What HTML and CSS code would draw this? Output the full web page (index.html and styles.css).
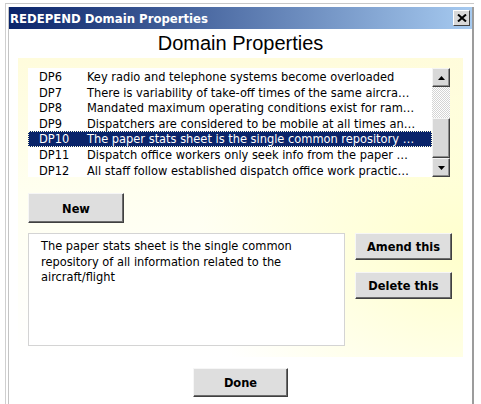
FILE: index.html
```html
<!DOCTYPE html>
<html lang="en">
<head>
  <meta charset="UTF-8" />
  <meta name="viewport" content="width=device-width, initial-scale=1.0"/>
  <title>REDEPEND Domain Properties</title>
  <link rel="stylesheet" href="styles.css">
</head>
<body>
  <div class="window">
    <div class="frame">
      <div class="titlebar">
        <span class="title">REDEPEND Domain Properties</span>
        <button class="close-btn" aria-label="Close">
          <svg width="10" height="8" viewBox="0 0 10 8"><path d="M1 0.5 L9 7.5 M9 0.5 L1 7.5" stroke="#000" stroke-width="2" fill="none"/></svg>
        </button>
      </div>

      <h1 class="heading">Domain Properties</h1>

      <div class="panel">
        <div class="listbox">
          <div class="rows">
            <div class="row"><span class="code">DP6</span><span class="desc">Key radio and telephone systems become overloaded</span></div>
            <div class="row"><span class="code">DP7</span><span class="desc">There is variability of take-off times of the same aircra…</span></div>
            <div class="row"><span class="code">DP8</span><span class="desc">Mandated maximum operating conditions exist for ram…</span></div>
            <div class="row"><span class="code">DP9</span><span class="desc">Dispatchers are considered to be mobile at all times an…</span></div>
            <div class="row selected"><span class="code">DP10</span><span class="desc">The paper stats sheet is the single common repository …</span></div>
            <div class="row"><span class="code">DP11</span><span class="desc">Dispatch office workers only seek info from the paper …</span></div>
            <div class="row"><span class="code">DP12</span><span class="desc">All staff follow established dispatch office work practic…</span></div>
          </div>
          <div class="scrollbar">
            <div class="sb-btn">
              <svg width="7" height="4" viewBox="0 0 7 4"><path d="M3.5 0 L7 4 L0 4 Z" fill="#000"/></svg>
            </div>
            <div class="sb-track"></div>
            <div class="sb-thumb"></div>
            <div class="sb-btn">
              <svg width="7" height="4" viewBox="0 0 7 4"><path d="M0 0 L7 0 L3.5 4 Z" fill="#000"/></svg>
            </div>
          </div>
        </div>

        <button class="btn btn-new">New</button>

        <div class="edit-area">
          <div class="textbox">The paper stats sheet is the single common<br>repository of all information related to the<br>aircraft/flight</div>
          <div class="side-buttons">
            <button class="btn btn-side">Amend this</button>
            <button class="btn btn-side">Delete this</button>
          </div>
        </div>
      </div>

      <div class="footer">
        <button class="btn btn-done">Done</button>
      </div>
    </div>
  </div>
</body>
</html>
```

FILE: styles.css
```css
body {
  margin: 0;
  overflow: hidden;
  background: #fff;
  font-family: "DejaVu Sans Condensed", "DejaVu Sans", sans-serif;
  font-size: 12.7px;
  color: #000;
}
.window {
  margin: 3px 0 0 5px;
  width: 466px;
  height: 397px;
  border-top: 1px solid #c8c8c8;
  border-left: 1px solid #cfcfcf;
  padding: 3px 0 0 2px;
}
.frame {
  border-left: 1px solid #c4c4c4;
  border-right: 2px solid #9c9c9c;
  height: 100%;
}
.titlebar {
  height: 22px;
  display: flex;
  align-items: center;
  justify-content: space-between;
  padding: 0 2px 0 1px;
  background: linear-gradient(to right, #0a246a, #a6caf0);
}
.title {
  color: #fff;
  font-weight: bold;
  font-size: 13px;
}
.close-btn {
  width: 17px;
  height: 16px;
  padding: 0;
  display: flex;
  align-items: center;
  justify-content: center;
  background: #d8d8d8;
  border: 1px solid;
  border-color: #fff #404040 #404040 #fff;
}
.heading {
  margin: 2px 0 3px;
  height: 24px;
  line-height: 24px;
  text-align: center;
  font-family: "Liberation Sans", Arial, sans-serif;
  font-weight: normal;
  font-size: 20px;
}
.panel {
  margin: 0 9px;
  padding: 10px 10px 11px;
  background:
    radial-gradient(ellipse 60% 70% at 100% 65%, #ffffcc 0%, rgba(255, 255, 204, 0) 100%),
    linear-gradient(to bottom, #fffcdc, #fffff0 45%, #ffffff);
}
.listbox {
  display: flex;
  height: 109px;
  width: 422px;
}
.rows {
  flex: 1;
  background: #fff;
  padding-top: 1px;
}
.row {
  display: flex;
  height: 15.6px;
  line-height: 15.6px;
  white-space: nowrap;
  overflow: hidden;
}
.row.selected {
  background: #0a246a;
  color: #fff;
  outline: 1px dotted #ffd;
  outline-offset: -1px;
}
.code {
  width: 48px;
  padding-left: 11px;
  flex-shrink: 0;
}
.scrollbar {
  width: 18px;
  display: flex;
  flex-direction: column;
}
.sb-btn, .sb-thumb {
  box-sizing: border-box;
  background: #d8d8d8;
  border: 1px solid;
  border-color: #f4f4f4 #404040 #404040 #f4f4f4;
  box-shadow: inset -1px -1px #8c8c8c;
}
.sb-btn {
  height: 19px;
  display: flex;
  align-items: center;
  justify-content: center;
}
.sb-track {
  height: 31px;
  background: repeating-conic-gradient(#d4d4d4 0 25%, #fff 0 50%) 0 0 / 2px 2px;
}
.sb-thumb {
  height: 40px;
}
.btn {
  box-sizing: border-box;
  padding: 0;
  background: #dedede;
  border: 1px solid;
  border-color: #f6f6f6 #404040 #404040 #f6f6f6;
  box-shadow: inset -1px -1px #6c6c6c;
  font-family: "DejaVu Sans Condensed", "DejaVu Sans", sans-serif;
  font-weight: bold;
  font-size: 12.7px;
  color: #000;
}
.btn-new {
  display: block;
  margin-top: 16px;
  width: 96px;
  height: 30px;
}
.edit-area {
  display: flex;
  gap: 10px;
  margin-top: 10px;
}
.textbox {
  box-sizing: border-box;
  width: 317px;
  height: 113px;
  padding: 4px 12px;
  background: #fff;
  border: 1px solid #d4d4d4;
  line-height: 15.5px;
}
.side-buttons {
  display: flex;
  flex-direction: column;
  gap: 12px;
}
.btn-side {
  width: 97px;
  height: 27px;
}
.footer {
  display: flex;
  justify-content: center;
  padding-top: 11px;
}
.btn-done {
  width: 95px;
  height: 29px;
}
```
